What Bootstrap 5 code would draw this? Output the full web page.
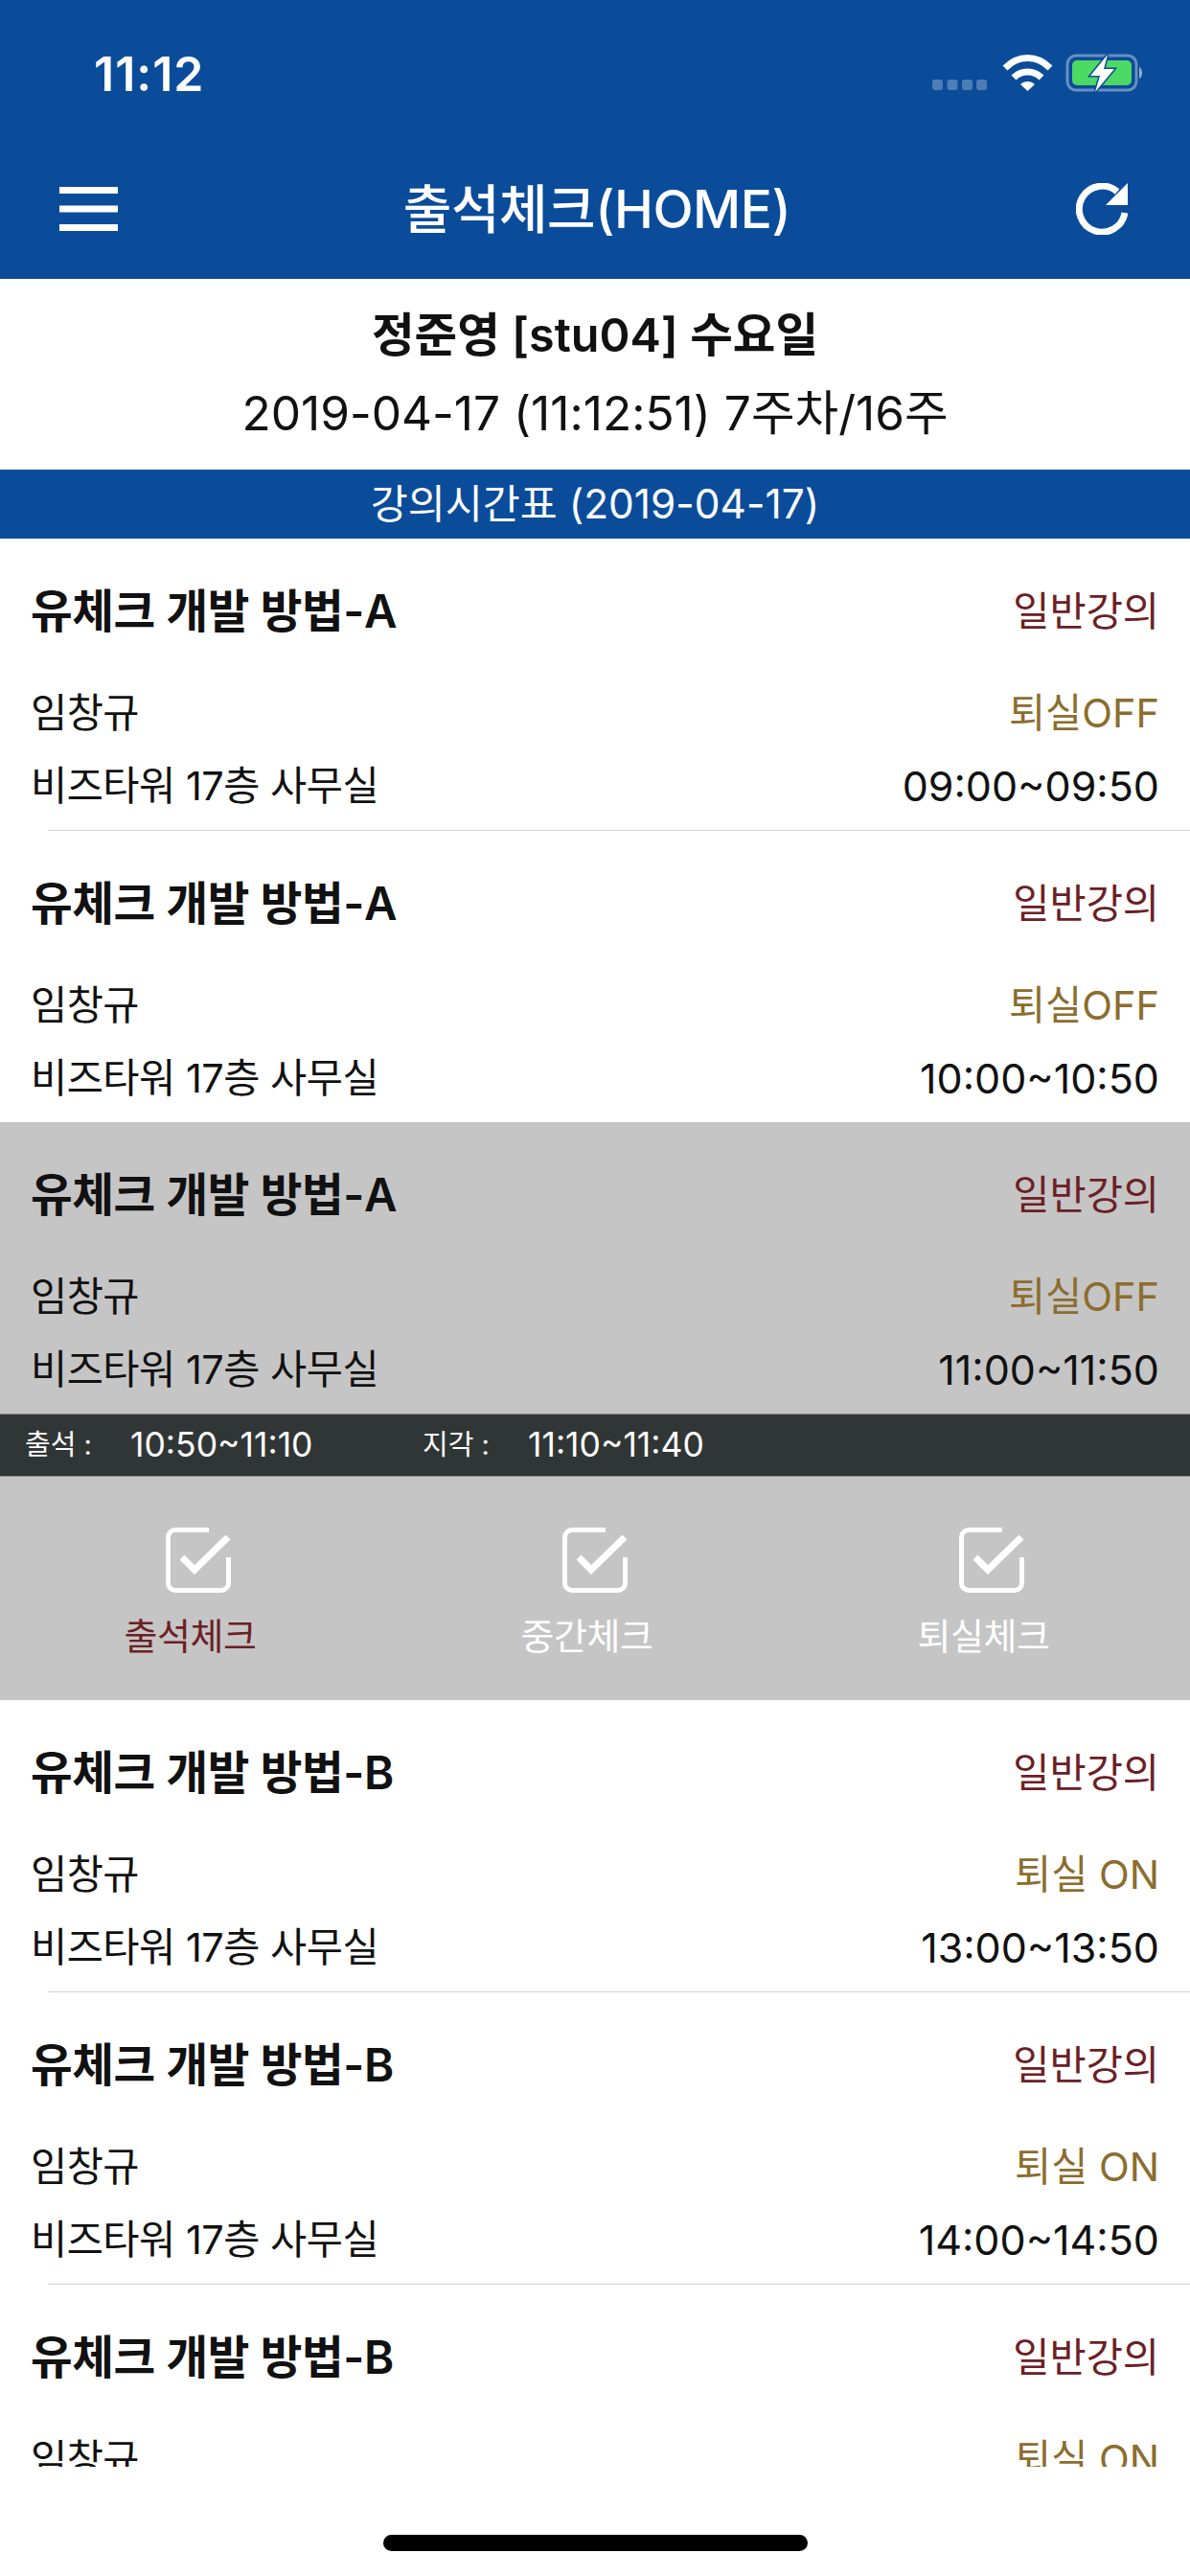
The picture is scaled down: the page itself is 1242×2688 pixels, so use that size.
<!DOCTYPE html>
<html lang="ko">
<head>
  <meta charset="UTF-8">
  <meta name="viewport" content="width=device-width, initial-scale=1.0">
  <title>출석체크(HOME)</title>
  <link href="https://cdn.jsdelivr.net/npm/bootstrap@5.3.2/dist/css/bootstrap.min.css" rel="stylesheet">
  <style>
    body { font-family: "Inter", "Noto Sans CJK KR", sans-serif; color: #111; background: #fff; }
    .app-frame { height: 2688px; overflow: hidden; }
    .top-blue { background: #0a4c9a; color: #fff; height: 291px; }
    .status-line { height: 154px; padding: 0 47px 0 98px; }
    .status-time { font-size: 50px; font-weight: 600; line-height: 1; letter-spacing: 1px; }
    .app-bar { height: 137px; padding: 0 65px 10px 62px; }
    .app-title { font-size: 55px; font-weight: 500; color: #fff; margin: 0; padding: 0; letter-spacing: -.5px; }
    .info-box { height: 199px; padding-top: 29px; }
    .info-name { font-size: 48.500px; font-weight: 600; line-height: 60px; }
    .info-date { font-size: 49.600px; line-height: 60px; margin-top: 21px; }
    .section-bar { background: #0a4c9a; color: #fff; height: 72px; font-size: 42.400px; line-height: 71px; text-align: center; }
    .lecture-scroll { height: 2012px; overflow: hidden; }
    .lecture-row { padding: 0 32px; height: 304px; }
    .lecture-row.is-open { background: #c5c5c5; height: 304px; }
    .row-rule { height: 1px; background: #d4d4d4; margin-left: 50px; }
    .row-top { height: 152px; }
    .row-mid { height: 60px; }
    .row-low { height: 60px; margin-top: 16px; }
    .lecture-name { font-size: 47.500px; font-weight: 600; letter-spacing: -.4px; }
    .lecture-type { font-size: 41.500px; color: #6b2025; }
    .lecture-text { font-size: 41.500px; letter-spacing: -.5px; }
    .exit-state { font-size: 41.500px; color: #8b6d2e; }
    .lecture-time { font-size: 43px; color: #111; }
    .time-bar { background: #303635; color: #fff; height: 66px; font-size: 29px; padding-left: 26px; border-top: 1px solid #8d8d8d; border-bottom: 1px solid #8d8d8d; }
    .time-label { width: 110px; }
    .time-value { width: 305px; font-size: 35.500px; }
    .check-panel { background: #c5c5c5; height: 233px; padding-top: 53px; }
    .check-icon { width: 68px; height: 68px; display: block; margin: 0 auto; }
    .check-label { font-size: 38px; color: #fff; line-height: 50px; margin-top: 20px; padding-right: 17px; letter-spacing: -.5px; }
    .check-label.is-done { color: #6b2025; }
    .home-bar { width: 443px; height: 17px; background: #000; border-radius: 9px; margin: 71px auto 0; }
  </style>
</head>
<body>
  <div class="app-frame">
    <header class="top-blue">
      <div class="status-line d-flex justify-content-between align-items-center">
        <span class="status-time">11:12</span>
        <svg width="222" height="42" viewBox="0 0 222 42">
          <g fill="#fff" opacity=".28">
            <rect x="0" y="27" width="11" height="11" rx="3"/>
            <rect x="15.500" y="27" width="11" height="11" rx="3"/>
            <rect x="31" y="27" width="11" height="11" rx="3"/>
            <rect x="46" y="27" width="11" height="11" rx="3"/>
          </g>
          <g fill="none" stroke="#fff" stroke-width="7">
            <path d="M76 15 C90 1 109 1 123 15"/>
            <path d="M85 25 C93 17 106 17 114 25"/>
          </g>
          <path d="M92 32 C96 28 103 28 107 32 L99.500 39 Z" fill="#fff"/>
          <rect x="141" y="2" width="72" height="36" rx="9" fill="none" stroke="#fff" stroke-opacity=".38" stroke-width="3"/>
          <path d="M216 14 C220 15 220 25 216 26 Z" fill="#fff" fill-opacity=".55"/>
          <rect x="146" y="7" width="62" height="26" rx="5" fill="#4cd964"/>
          <path d="M183 1 L165 23 L175 23 L170 40 L190 16 L179 16 Z" fill="#fff" stroke="#0a4c9a" stroke-width="3" paint-order="stroke"/>
        </svg>
      </div>
      <nav class="navbar app-bar flex-nowrap justify-content-between align-items-center">
        <svg width="61" height="46" viewBox="0 0 61 46"><path d="M0 3.500H61M0 23H61M0 42.500H61" stroke="#fff" stroke-width="7"/></svg>
        <h1 class="navbar-brand app-title">출석체크(HOME)</h1>
        <svg width="54" height="54" viewBox="0 0 54 54">
          <path d="M43 9 A24 24 0 1 0 51 31" fill="none" stroke="#fff" stroke-width="7"/>
          <path d="M54 0 V23 H31 Z" fill="#fff"/>
        </svg>
      </nav>
    </header>

    <section class="info-box text-center">
      <div class="info-name">정준영 [stu04] 수요일</div>
      <div class="info-date">2019-04-17 (11:12:51) 7주차/16주</div>
    </section>
    <div class="section-bar">강의시간표 (2019-04-17)</div>

    <main class="lecture-scroll" id="lectures"></main>

    <div class="home-bar"></div>
  </div>

  <script src="https://cdn.jsdelivr.net/npm/bootstrap@5.3.2/dist/js/bootstrap.bundle.min.js"></script>
  <script>
    const lectures = [
      { name: '유체크 개발 방법-A', exit: '퇴실OFF', time: '09:00~09:50', rule: true },
      { name: '유체크 개발 방법-A', exit: '퇴실OFF', time: '10:00~10:50' },
      { name: '유체크 개발 방법-A', exit: '퇴실OFF', time: '11:00~11:50', open: true },
      { name: '유체크 개발 방법-B', exit: '퇴실 ON', time: '13:00~13:50', rule: true },
      { name: '유체크 개발 방법-B', exit: '퇴실 ON', time: '14:00~14:50', rule: true },
      { name: '유체크 개발 방법-B', exit: '퇴실 ON', time: '15:00~15:50' },
    ];

    const checkIcon = `
      <svg class="check-icon" viewBox="0 0 68 68">
        <path d="M45 2.500H10 A7.500 7.500 0 0 0 2.500 10V58 A7.500 7.500 0 0 0 10 65.500H58 A7.500 7.500 0 0 0 65.500 58V31" fill="none" stroke="#fff" stroke-width="5"/>
        <path d="M17 31 L30 44 L65 10" fill="none" stroke="#fff" stroke-width="7"/>
      </svg>`;

    const openPanel = `
      <div class="time-bar d-flex align-items-center">
        <span class="time-label">출석 :</span><span class="time-value">10:50~11:10</span>
        <span class="time-label">지각 :</span><span class="time-value">11:10~11:40</span>
      </div>
      <div class="check-panel row g-0 text-center">
        <div class="col-4">${checkIcon}<div class="check-label is-done">출석체크</div></div>
        <div class="col-4">${checkIcon}<div class="check-label">중간체크</div></div>
        <div class="col-4">${checkIcon}<div class="check-label">퇴실체크</div></div>
      </div>`;

    document.getElementById('lectures').innerHTML = lectures.map(l => `
      <div class="lecture-row ${l.open ? 'is-open' : ''}">
        <div class="row-top d-flex justify-content-between align-items-center">
          <span class="lecture-name">${l.name}</span><span class="lecture-type">일반강의</span>
        </div>
        <div class="row-mid d-flex justify-content-between align-items-center">
          <span class="lecture-text">임창규</span><span class="exit-state">${l.exit}</span>
        </div>
        <div class="row-low d-flex justify-content-between align-items-center">
          <span class="lecture-text">비즈타워 17층 사무실</span><span class="lecture-time">${l.time}</span>
        </div>
      </div>
      ${l.rule ? '<div class="row-rule"></div>' : ''}
      ${l.open ? openPanel : ''}
    `).join('');
  </script>
</body>
</html>
